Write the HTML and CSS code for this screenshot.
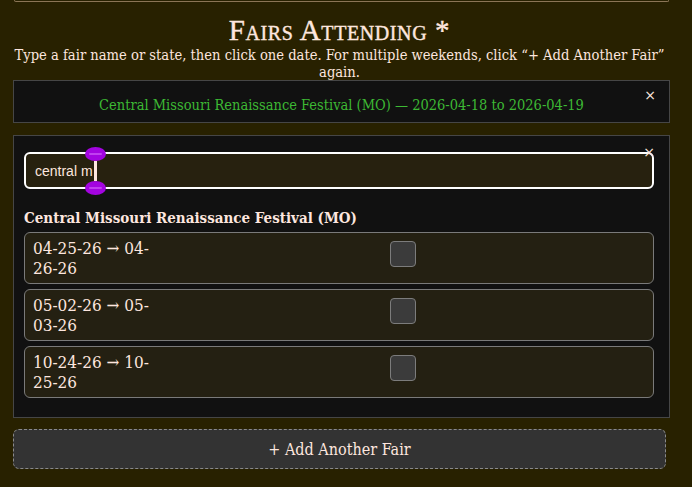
FILE: index.html
```html
<!DOCTYPE html>
<html>
<head>
<meta charset="utf-8">
<link rel="stylesheet" href="styles.css">
</head>
<body>
<div class="prev"></div>
<div class="wrap">
  <h2 class="title">Fairs Attending *</h2>
  <p class="hint">Type a fair name or state, then click one date. For multiple weekends, click “+ Add Another Fair” again.</p>

  <div class="box chosen">
    <span class="chosen-text">Central Missouri Renaissance Festival (MO) — 2026-04-18 to 2026-04-19</span>
    <span class="close">×</span>
  </div>

  <div class="box picker">
    <span class="close close2">×</span>
    <div class="input">
      <span class="typed">central m</span><span class="caret"><span class="handle top"></span><span class="handle bottom"></span></span>
    </div>
    <div class="fair-name">Central Missouri Renaissance Festival (MO)</div>
    <div class="rows">
      <div class="row"><span class="dates">04-25-26 → 04-26-26</span><span class="cb"></span></div>
      <div class="row"><span class="dates">05-02-26 → 05-03-26</span><span class="cb"></span></div>
      <div class="row"><span class="dates">10-24-26 → 10-25-26</span><span class="cb"></span></div>
    </div>
  </div>

  <div class="add">+ Add Another Fair</div>
</div>
</body>
</html>
```
FILE: styles.css
```css
html, body {
  margin: 0;
  padding: 0;
  background: #282100;
  height: 100%;
  overflow: hidden;
}
body {
  font-family: "DejaVu Serif Condensed", "DejaVu Serif", serif;
  color: #fde6df;
}
.prev {
  margin: 0 23px 0 14px;
  height: 1px;
  border: 1px solid #8b7556;
  border-top: none;
  border-radius: 0 0 4px 4px;
}
.wrap {
  width: 653px;
  padding-left: 13px;
}
.title {
  margin: 12px 0 0 0;
  text-align: center;
  font-family: "Liberation Serif", serif;
  font-variant: small-caps;
  font-weight: normal;
  font-size: 29px;
  line-height: 32px;
  letter-spacing: 0.6px;
  -webkit-text-stroke: 0.4px #fde6df;
}
.hint {
  margin: 0;
  text-align: center;
  font-size: 14.6px;
  line-height: 17px;
}
.box {
  position: relative;
  box-sizing: border-box;
  width: 657px;
  background: #111111;
  border: 1px solid #464646;
}
.chosen {
  margin-top: 0;
  height: 43px;
  padding: 14px 10px 0 10px;
  text-align: center;
}
.chosen-text {
  color: #3db934;
  font-size: 14.5px;
  line-height: 20px;
}
.close {
  position: absolute;
  right: 13px;
  top: 6px;
  font-family: "DejaVu Sans", sans-serif;
  font-size: 14px;
  color: #fde6df;
}
.close2 {
  top: 8px;
  right: 14px;
  z-index: 2;
}
.picker {
  margin-top: 12px;
  height: 283px;
  padding: 16px 15px 0 10px;
}
.input {
  position: relative;
  box-sizing: border-box;
  height: 37px;
  border: 2px solid #ffffff;
  border-radius: 6px;
  background: #27210f;
  padding-left: 9px;
  display: flex;
  align-items: center;
  font-family: "Liberation Sans", Arial, sans-serif;
  font-size: 14px;
}
.typed {
  color: #fde6df;
}
.caret {
  position: relative;
  display: inline-block;
  width: 3px;
  height: 20px;
  background: #fde6df;
  margin-left: 1px;
}
.handle {
  position: absolute;
  left: -9px;
  width: 21px;
  height: 14px;
  background: #a304e0;
  border-radius: 50%;
}
.handle::after {
  content: "";
  position: absolute;
  left: 4px;
  right: 4px;
  top: 6px;
  height: 2px;
  background: #c040f0;
  border-radius: 1px;
}
.handle.top { top: -14px; }
.handle.bottom { bottom: -14px; }
.fair-name {
  margin-top: 19px;
  font-weight: bold;
  font-size: 15px;
  line-height: 20px;
}
.rows {
  margin-top: 4px;
  display: flex;
  flex-direction: column;
  gap: 5px;
}
.row {
  box-sizing: border-box;
  height: 52px;
  background: #242012;
  border: 1px solid #7a7a7a;
  border-radius: 6px;
  padding: 5px 8px;
  display: flex;
  align-items: center;
}
.dates {
  width: 130px;
  font-size: 17px;
  line-height: 20px;
  align-self: flex-start;
}
.cb {
  box-sizing: border-box;
  width: 26px;
  height: 26px;
  margin-left: 227px;
  background: #3b3b3b;
  border: 1px solid #7c7c7c;
  border-radius: 4px;
  margin-top: -8px;
}
.add {
  margin-top: 11px;
  box-sizing: border-box;
  height: 40px;
  border: 1px dashed #8a8a8a;
  border-radius: 6px;
  background: #333333;
  display: flex;
  align-items: center;
  justify-content: center;
  font-size: 16px;
}
```
